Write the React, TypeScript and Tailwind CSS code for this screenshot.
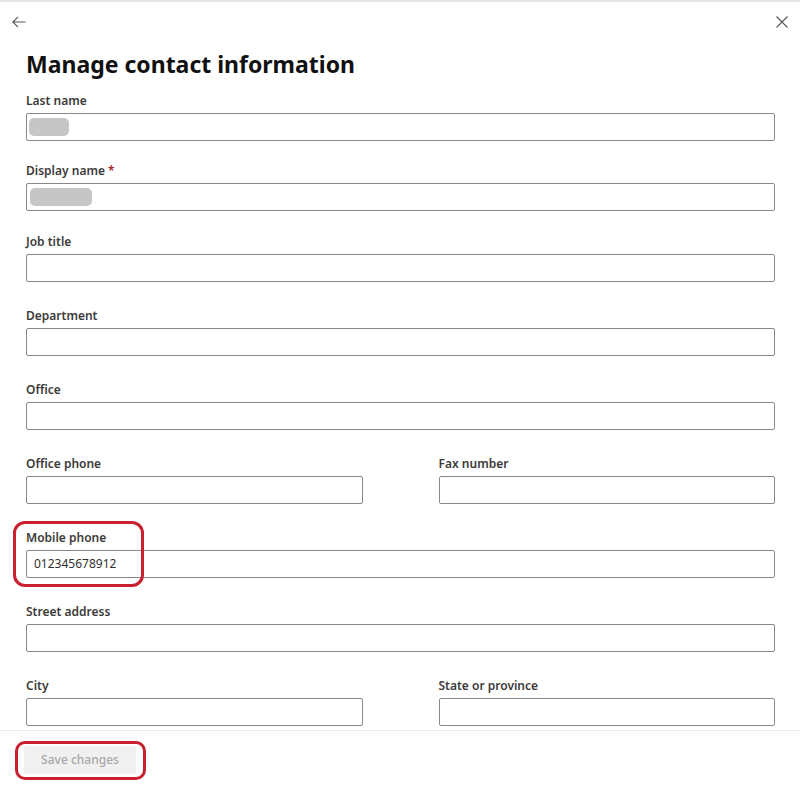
import { ReactNode } from "react";

function Field({
  label,
  required,
  className = "",
  children,
}: {
  label: string;
  required?: boolean;
  className?: string;
  children?: ReactNode;
}) {
  return (
    <div className={className}>
      <div className="h-4 text-[12px] font-semibold leading-4 text-[#3b3a39]">
        {label}
        {required && <span className="text-[#a4262c]"> *</span>}
      </div>
      <div className="mt-1 flex h-[28px] items-center rounded-[2px] border border-[#8a8886] bg-white px-[7px] text-[12px] text-[#323130]">
        {children}
      </div>
    </div>
  );
}

function Redacted({ w }: { w: string }) {
  return <div className={`h-[18px] rounded-[5px] bg-[#c6c6c6] ${w}`} />;
}

export default function App() {
  return (
    <div
      className="relative flex h-[785px] w-[800px] flex-col overflow-hidden border-t-2 border-[#e6e6e6] bg-white"
      style={{ fontFamily: '"Noto Sans", "Open Sans", sans-serif' }}
    >
      <div className="flex h-[40px] items-center justify-between pl-[11px] pr-[11px]">
        <svg width="16" height="16" viewBox="0 0 16 16" className="text-[#555]">
          <path d="M14.5 8H1.8M7 2.8 1.8 8 7 13.2" fill="none" stroke="currentColor" strokeWidth="1.1" />
        </svg>
        <svg width="14" height="14" viewBox="0 0 14 14" className="text-[#555]">
          <path d="M1.5 1.5 12.5 12.5M12.5 1.5 1.5 12.5" fill="none" stroke="currentColor" strokeWidth="1.1" />
        </svg>
      </div>

      <div className="flex-1 pl-[26px] pr-[25px]">
        <h1 className="mt-[4px] text-[23px] font-bold leading-[36px] text-[#111]">
          Manage contact information
        </h1>

        <Field label="Last name" className="mt-[11px]">
          <Redacted w="w-[40px] -ml-[5px]" />
        </Field>
        <Field label="Display name" required className="mt-[22px]">
          <Redacted w="w-[62px] -ml-[4px]" />
        </Field>
        <Field label="Job title" className="mt-[23px]" />
        <Field label="Department" className="mt-[26px]" />
        <Field label="Office" className="mt-[26px]" />
        <div className="mt-[26px] grid grid-cols-2 gap-x-[76px]">
          <Field label="Office phone" />
          <Field label="Fax number" />
        </div>
        <Field label="Mobile phone" className="mt-[26px]">
          012345678912
        </Field>
        <Field label="Street address" className="mt-[26px]" />
        <div className="mt-[26px] grid grid-cols-2 gap-x-[76px]">
          <Field label="City" />
          <Field label="State or province" />
        </div>
      </div>

      <div className="h-[55px] border-t border-[#ebebeb] px-[24px] pt-[15px]">
        <button className="h-[28px] w-[112px] rounded-[2px] bg-[#f0f0f0] text-[12px] font-medium text-[#a8a8a8]">
          Save changes
        </button>
      </div>

      <div className="pointer-events-none absolute left-[13px] top-[519px] h-[66px] w-[131px] rounded-[12px] border-[3px] border-[#c8202f]" />
      <div className="pointer-events-none absolute left-[15px] top-[739px] h-[39px] w-[131px] rounded-[10px] border-[3px] border-[#c8202f]" />
    </div>
  );
}
